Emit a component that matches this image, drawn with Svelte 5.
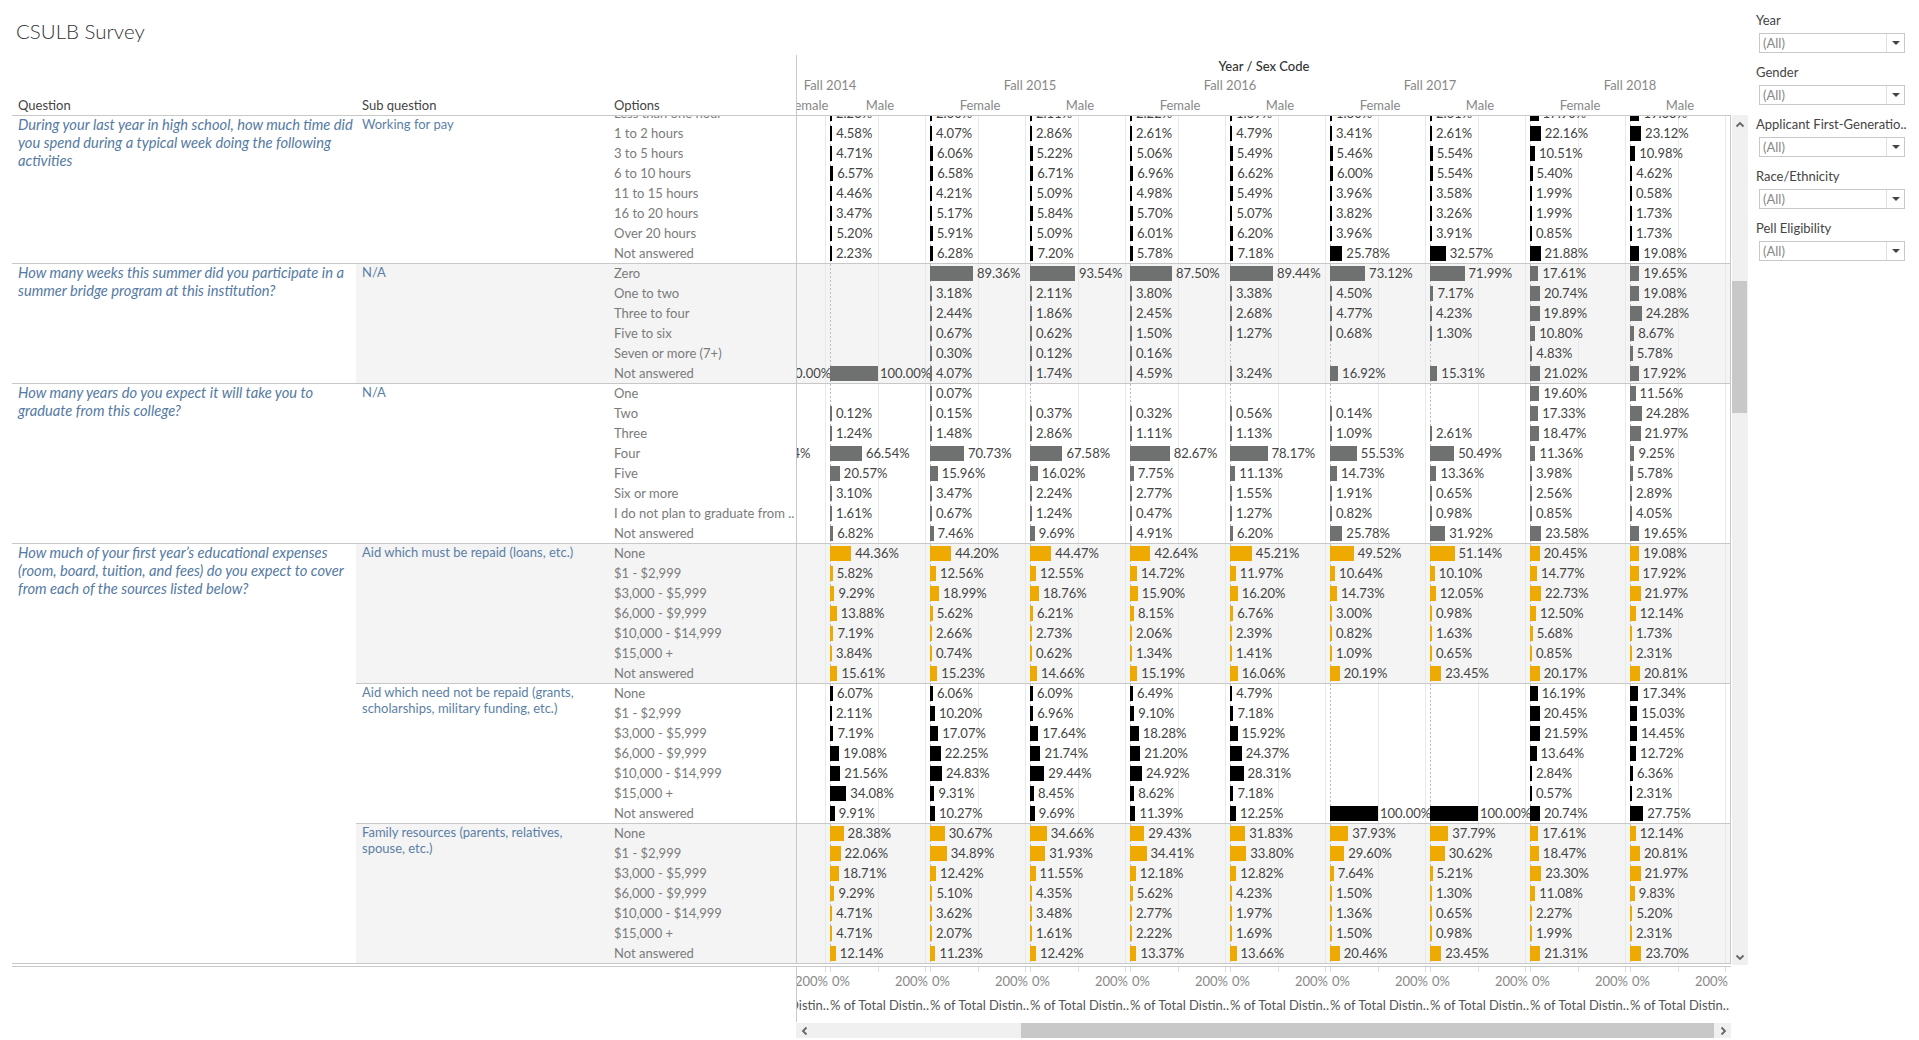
<script>
  const K = 0.48;
  const panesAxis = Array(10).fill(0);
  const years = ['Fall 2014', 'Fall 2015', 'Fall 2016', 'Fall 2017', 'Fall 2018'];
  const sexes = ['Female', 'Male', 'Female', 'Male', 'Female', 'Male', 'Female', 'Male', 'Female', 'Male'];
  const filters = ['Year', 'Gender', 'Applicant First-Generatio..', 'Race/Ethnicity', 'Pell Eligibility'];
  const money = ['None', '$1 - $2,999', '$3,000 - $5,999', '$6,000 - $9,999', '$10,000 - $14,999', '$15,000 +', 'Not answered'];

  const r = (labels, text, first = {}) =>
    text.trim().split('\n').map((line, i) => ({
      label: labels[i],
      first: first[i] ?? null,
      vals: line.trim().split(/\s+/).map((v) => (v === '-' ? null : v))
    }));

  const sections = [
    {
      q: 'During your last year in high school, how much time did you spend during a typical week doing the following activities',
      subs: [{
        name: 'Working for pay', color: '#000', grey: false, scrolled: true,
        rows: r(['Less than one hour', '1 to 2 hours', '3 to 5 hours', '6 to 10 hours', '11 to 15 hours', '16 to 20 hours', 'Over 20 hours', 'Not answered'], `
          2.23 2.60 2.11 2.22 1.69 1.80 2.61 17.90 19.63
          4.58 4.07 2.86 2.61 4.79 3.41 2.61 22.16 23.12
          4.71 6.06 5.22 5.06 5.49 5.46 5.54 10.51 10.98
          6.57 6.58 6.71 6.96 6.62 6.00 5.54 5.40 4.62
          4.46 4.21 5.09 4.98 5.49 3.96 3.58 1.99 0.58
          3.47 5.17 5.84 5.70 5.07 3.82 3.26 1.99 1.73
          5.20 5.91 5.09 6.01 6.20 3.96 3.91 0.85 1.73
          2.23 6.28 7.20 5.78 7.18 25.78 32.57 21.88 19.08`)
      }]
    },
    {
      q: 'How many weeks this summer did you participate in a summer bridge program at this institution?',
      subs: [{
        name: 'N/A', color: '#6f7070', grey: true,
        rows: r(['Zero', 'One to two', 'Three to four', 'Five to six', 'Seven or more (7+)', 'Not answered'], `
          - 89.36 93.54 87.50 89.44 73.12 71.99 17.61 19.65
          - 3.18 2.11 3.80 3.38 4.50 7.17 20.74 19.08
          - 2.44 1.86 2.45 2.68 4.77 4.23 19.89 24.28
          - 0.67 0.62 1.50 1.27 0.68 1.30 10.80 8.67
          - 0.30 0.12 0.16 - - - 4.83 5.78
          100.00 4.07 1.74 4.59 3.24 16.92 15.31 21.02 17.92`, { 5: '100.00' })
      }]
    },
    {
      q: 'How many years do you expect it will take you to graduate from this college?',
      subs: [{
        name: 'N/A', color: '#6f7070', grey: false,
        rows: r(['One', 'Two', 'Three', 'Four', 'Five', 'Six or more', 'I do not plan to graduate from ..', 'Not answered'], `
          - 0.07 - - - - - 19.60 11.56
          0.12 0.15 0.37 0.32 0.56 0.14 - 17.33 24.28
          1.24 1.48 2.86 1.11 1.13 1.09 2.61 18.47 21.97
          66.54 70.73 67.58 82.67 78.17 55.53 50.49 11.36 9.25
          20.57 15.96 16.02 7.75 11.13 14.73 13.36 3.98 5.78
          3.10 3.47 2.24 2.77 1.55 1.91 0.65 2.56 2.89
          1.61 0.67 1.24 0.47 1.27 0.82 0.98 0.85 4.05
          6.82 7.46 9.69 4.91 6.20 25.78 31.92 23.58 19.65`, { 3: '68.44' })
      }]
    },
    {
      q: 'How much of your first year’s educational expenses (room, board, tuition, and fees) do you expect to cover from each of the sources listed below?',
      subs: [
        {
          name: 'Aid which must be repaid (loans, etc.)', color: '#eeaa00', grey: true,
          rows: r(money, `
            44.36 44.20 44.47 42.64 45.21 49.52 51.14 20.45 19.08
            5.82 12.56 12.55 14.72 11.97 10.64 10.10 14.77 17.92
            9.29 18.99 18.76 15.90 16.20 14.73 12.05 22.73 21.97
            13.88 5.62 6.21 8.15 6.76 3.00 0.98 12.50 12.14
            7.19 2.66 2.73 2.06 2.39 0.82 1.63 5.68 1.73
            3.84 0.74 0.62 1.34 1.41 1.09 0.65 0.85 2.31
            15.61 15.23 14.66 15.19 16.06 20.19 23.45 20.17 20.81`)
        },
        {
          name: 'Aid which need not be repaid (grants, scholarships, military funding, etc.)', color: '#000', grey: false,
          rows: r(money, `
            6.07 6.06 6.09 6.49 4.79 - - 16.19 17.34
            2.11 10.20 6.96 9.10 7.18 - - 20.45 15.03
            7.19 17.07 17.64 18.28 15.92 - - 21.59 14.45
            19.08 22.25 21.74 21.20 24.37 - - 13.64 12.72
            21.56 24.83 29.44 24.92 28.31 - - 2.84 6.36
            34.08 9.31 8.45 8.62 7.18 - - 0.57 2.31
            9.91 10.27 9.69 11.39 12.25 100.00 100.00 20.74 27.75`)
        },
        {
          name: 'Family resources (parents, relatives, spouse, etc.)', color: '#eeaa00', grey: true,
          rows: r(money, `
            28.38 30.67 34.66 29.43 31.83 37.93 37.79 17.61 12.14
            22.06 34.89 31.93 34.41 33.80 29.60 30.62 18.47 20.81
            18.71 12.42 11.55 12.18 12.82 7.64 5.21 23.30 21.97
            9.29 5.10 4.35 5.62 4.23 1.50 1.30 11.08 9.83
            4.71 3.62 3.48 2.77 1.97 1.36 0.65 2.27 5.20
            4.71 2.07 1.61 2.22 1.69 1.50 0.98 1.99 2.31
            12.14 11.23 12.42 13.37 13.66 20.46 23.45 21.31 23.70`)
        }
      ]
    }
  ];
</script>

{#snippet cell(v, color)}
  <div class="pane">
    {#if v !== null}
      <span class="slot" style="width:{parseFloat(v) * K}px"><i class="bar" style="background:{color}"></i></span>
      <span class="val" class:full={parseFloat(v) >= 100}>{v}%</span>
    {/if}
  </div>
{/snippet}

<div class="page">
  <div class="main">
    <div class="title">CSULB Survey</div>

    <div class="head">
      <div class="head-col c-q">Question</div>
      <div class="head-col c-s">Sub question</div>
      <div class="head-col c-o">Options</div>
      <div class="head-plot">
        <div class="head-name">Year / Sex Code</div>
        <div class="shift years">
          {#each years as y}<div class="year">{y}</div>{/each}
        </div>
        <div class="shift sexes">
          {#each sexes as s}<div class="sex">{s}</div>{/each}
        </div>
      </div>
    </div>

    <div class="body">
      <div class="table">
        {#each sections as s}
          <div class="q">
            <div class="qtext"><p>{s.q}</p></div>
            <div class="subs">
              {#each s.subs as sub}
                <div class="sub" class:grey={sub.grey}>
                  <div class="subtext"><p>{sub.name}</p></div>
                  <div class="rows" class:scrolled={sub.scrolled}>
                    {#each sub.rows as row}
                      <div class="row">
                        <div class="opt">{row.label}</div>
                        <div class="plot">
                          <div class="shift">
                            {@render cell(row.first, sub.color)}
                            {#each row.vals as v}{@render cell(v, sub.color)}{/each}
                          </div>
                        </div>
                      </div>
                    {/each}
                  </div>
                </div>
              {/each}
            </div>
          </div>
        {/each}
      </div>
      <div class="vscroll">
        <svg class="chev-up" width="10" height="7" viewBox="0 0 10 7"><path d="M1.5 5.5 5 2l3.5 3.5" fill="none" stroke="#666" stroke-width="1.8"/></svg>
        <div class="vthumb"></div>
        <svg class="chev-down" width="10" height="7" viewBox="0 0 10 7"><path d="M1.5 1.5 5 5l3.5-3.5" fill="none" stroke="#666" stroke-width="1.8"/></svg>
      </div>
    </div>

    <div class="axis">
      <div class="axis-plot">
        <div class="shift ticks">
          {#each panesAxis as _}
            <div class="tick-pane"><span>0%</span><span>200%</span></div>
          {/each}
        </div>
        <div class="shift axis-titles">
          {#each panesAxis as _}<div class="axis-title">% of Total Distin..</div>{/each}
        </div>
      </div>
    </div>

    <div class="hscroll">
      <svg class="chev-l" width="7" height="10" viewBox="0 0 7 10"><path d="M5.5 1.5 2 5l3.5 3.5" fill="none" stroke="#666" stroke-width="1.8"/></svg>
      <div class="hthumb"></div>
      <svg class="chev-r" width="7" height="10" viewBox="0 0 7 10"><path d="M1.5 1.5 5 5 1.5 8.5" fill="none" stroke="#666" stroke-width="1.8"/></svg>
    </div>
  </div>

  <div class="filters">
    {#each filters as f}
      <div class="filter">
        <div class="f-label">{f}</div>
        <div class="f-box">
          <span class="f-val">(All)</span>
          <span class="f-btn"><i class="tri"></i></span>
        </div>
      </div>
    {/each}
  </div>
</div>

<style>
  :global(body) { margin: 0; background: #fff; }
  .page {
    width: 1919px; height: 1040px; display: flex; overflow: hidden;
    font-family: "Lato", "Open Sans", sans-serif; font-size: 13px; color: #444;
  }
  .main { width: 1748px; flex: none; }

  .title { height: 55px; box-sizing: border-box; padding: 19px 0 0 16px; font-size: 20.5px; font-weight: 300; line-height: 24px; color: #333; }

  .head { height: 61px; box-sizing: border-box; margin-left: 12px; width: 1719px; display: flex; border-bottom: 1px solid #c8c8c8; }
  .head-col { align-self: flex-end; line-height: 18px; padding: 0 0 1px 6px; box-sizing: border-box; color: #444; }
  .c-q { width: 344px; }
  .c-s { width: 252px; }
  .c-o { width: 188px; }
  .head-plot { width: 935px; box-sizing: border-box; border-left: 1px solid #c8c8c8; overflow: hidden; }
  .head-name { height: 22px; line-height: 22px; text-align: center; color: #333; font-weight: 500; }
  .shift { display: flex; margin-left: -67px; width: 1000px; }
  .years { height: 16px; line-height: 16px; color: #888; }
  .year { width: 200px; text-align: center; flex: none; }
  .sexes { height: 22px; padding-top: 3px; box-sizing: border-box; line-height: 18px; color: #888; }
  .sex { width: 100px; text-align: center; flex: none; box-sizing: border-box; }
  .sex:first-child { padding-left: 56px; }

  .body { display: flex; margin-left: 12px; }
  .table { width: 1719px; flex: none; }

  .q { display: flex; }
  .qtext { width: 344px; flex: none; box-sizing: border-box; padding: 0 0 0 6px; border-bottom: 1px solid #c8c8c8; color: #557aa3; font-style: italic; font-size: 14.7px; line-height: 18px; }
  .qtext p { margin: -1px 0 0; }
  .subtext p { margin: 0; }
  .subs { flex: 1; min-width: 0; }
  .sub { display: flex; border-bottom: 1px solid #c8c8c8; overflow: hidden; }
  .sub.grey { background: #f4f4f4; }
  .subtext { width: 252px; flex: none; box-sizing: border-box; padding: 0 8px 0 6px; line-height: 16px; color: #5b7fa6; }
  .rows { flex: 1; margin-bottom: -1px; min-width: 0; }
  .rows.scrolled { margin-top: -12px; }
  .row { display: flex; height: 20px; }
  .opt { width: 188px; flex: none; box-sizing: border-box; padding-left: 6px; line-height: 19px; color: #7b7b7b; white-space: nowrap; overflow: hidden; }
  .plot { width: 935px; flex: none; box-sizing: border-box; border-left: 1px solid #c8c8c8; border-right: 1px solid #c8c8c8; overflow: hidden; }
  .pane {
    width: 100px; height: 20px; flex: none; display: flex; align-items: flex-start; padding-top: 2px; box-sizing: border-box;
    background:
      repeating-linear-gradient(to bottom, #bdbdbd 0 2px, transparent 2px 4px) 0 0 / 1px 100% no-repeat,
      linear-gradient(#e9e9e9, #e9e9e9) 48px 0 / 1px 100% no-repeat,
      linear-gradient(#e9e9e9, #e9e9e9) 95px 0 / 1px 100% no-repeat;
  }
  .slot { display: flex; min-width: 2px; flex: none; }
  .bar { display: block; height: 15px; min-width: 1px; width: 100%; }
  .val { margin-left: 4px; line-height: 15px; white-space: nowrap; color: #444; }
  .val.full { margin-left: 2px; }

  .vscroll { width: 16px; margin: -1px 0 0 1px; background: #f0f0f0; display: flex; flex-direction: column; align-items: center; position: relative; height: 850px; }
  .chev-up { position: absolute; top: 6px; left: 3px; }
  .vthumb { position: absolute; top: 166px; left: 0; width: 15px; height: 132px; background: #c8c8c8; }
  .chev-down { position: absolute; bottom: 4px; left: 3px; }

  .axis { margin: 1px 0 0 12px; width: 1719px; border-top: 1px solid #c8c8c8; padding-left: 784px; box-sizing: border-box; }
  .axis-plot { width: 935px; height: 55px; box-sizing: border-box; border-left: 1px solid #c8c8c8; overflow: hidden; }
  .ticks { height: 23px; }
  .tick-pane {
    width: 100px; flex: none; box-sizing: border-box; padding: 6px 2px 0; display: flex; justify-content: space-between; line-height: 16px; color: #888;
    background:
      linear-gradient(#ddd, #ddd) 0 0 / 1px 5px no-repeat,
      linear-gradient(#ddd, #ddd) 48px 0 / 1px 5px no-repeat,
      linear-gradient(#ddd, #ddd) 95px 0 / 1px 5px no-repeat;
  }
  .axis-titles { height: 16px; margin-top: 7px; line-height: 16px; color: #555; }
  .axis-title { width: 100px; flex: none; white-space: nowrap; overflow: hidden; }

  .hscroll { margin: 1px 0 0 796px; width: 935px; height: 15px; background: #f0f0f0; position: relative; }
  .hthumb { position: absolute; left: 225px; top: 0; width: 693px; height: 15px; background: #c8c8c8; }
  .chev-l { position: absolute; left: 5px; top: 3px; }
  .chev-r { position: absolute; right: 4px; top: 3px; }

  .filters { flex: 1; padding: 12px 0 0 8px; }
  .filter { margin-bottom: 12px; }
  .f-label { height: 16px; line-height: 16px; color: #444; white-space: nowrap; margin-bottom: 5px; }
  .f-box { width: 146px; height: 20px; margin-left: 3px; box-sizing: border-box; border: 1px solid #c8c8c8; display: flex; justify-content: space-between; margin-bottom: -1px; }
  .f-val { padding-left: 3px; line-height: 18px; color: #888; }
  .f-btn { width: 17px; border-left: 1px solid #e0e0e0; display: flex; align-items: center; justify-content: center; }
  .tri { display: block; width: 0; height: 0; border: 4px solid transparent; border-top: 4px solid #444; border-bottom: 0; }
</style>
